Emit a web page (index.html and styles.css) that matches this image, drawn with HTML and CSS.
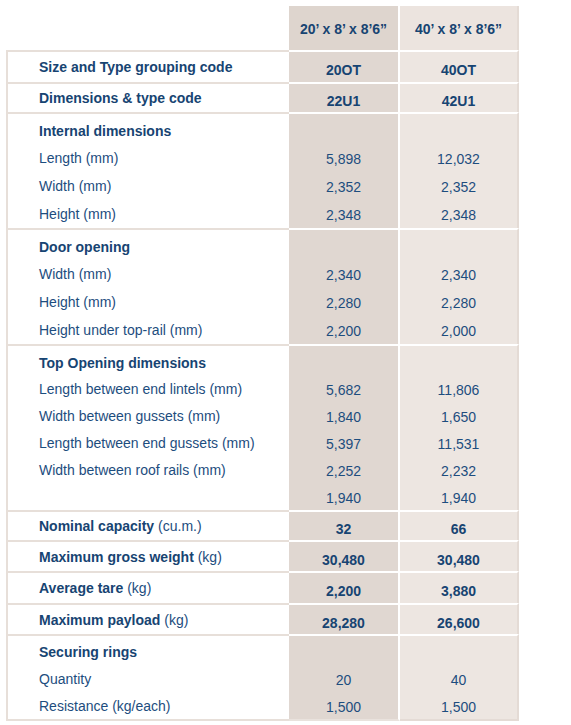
FILE: index.html
```html
<!DOCTYPE html>
<html lang="en">
<head>
  <meta charset="UTF-8" />
  <title>Open Top Container Specifications</title>
  <meta name="viewport" content="width=device-width, initial-scale=1.0" />
  <link rel="stylesheet" href="styles.css">
</head>
<body>
  <table class="spec">
    <colgroup>
      <col class="col-lbl">
      <col class="col-a">
      <col class="col-b">
    </colgroup>
    <thead>
      <tr class="head">
        <th class="blank"></th>
        <th class="v1">20’ x 8’ x 8’6”</th>
        <th class="v2">40’ x 8’ x 8’6”</th>
      </tr>
    </thead>
    <tbody>
      <!-- codes -->
      <tr class="first single h30">
        <td class="lbl"><b>Size and Type grouping code</b></td>
        <td class="v1"><b>20OT</b></td>
        <td class="v2"><b>40OT</b></td>
      </tr>
      <tr class="first single h28">
        <td class="lbl"><b>Dimensions &amp; type code</b></td>
        <td class="v1"><b>22U1</b></td>
        <td class="v2"><b>42U1</b></td>
      </tr>

      <!-- Internal dimensions -->
      <tr class="first group g28">
        <td class="lbl"><b>Internal dimensions</b></td>
        <td class="v1"></td>
        <td class="v2"></td>
      </tr>
      <tr class="sub g28">
        <td class="lbl">Length (mm)</td>
        <td class="v1">5,898</td>
        <td class="v2">12,032</td>
      </tr>
      <tr class="sub g28">
        <td class="lbl">Width (mm)</td>
        <td class="v1">2,352</td>
        <td class="v2">2,352</td>
      </tr>
      <tr class="sub g28">
        <td class="lbl">Height (mm)</td>
        <td class="v1">2,348</td>
        <td class="v2">2,348</td>
      </tr>

      <!-- Door opening -->
      <tr class="first group g28">
        <td class="lbl"><b>Door opening</b></td>
        <td class="v1"></td>
        <td class="v2"></td>
      </tr>
      <tr class="sub g28">
        <td class="lbl">Width (mm)</td>
        <td class="v1">2,340</td>
        <td class="v2">2,340</td>
      </tr>
      <tr class="sub g28">
        <td class="lbl">Height (mm)</td>
        <td class="v1">2,280</td>
        <td class="v2">2,280</td>
      </tr>
      <tr class="sub g28">
        <td class="lbl">Height under top-rail (mm)</td>
        <td class="v1">2,200</td>
        <td class="v2">2,000</td>
      </tr>

      <!-- Top opening -->
      <tr class="first group g27">
        <td class="lbl"><b>Top Opening dimensions</b></td>
        <td class="v1"></td>
        <td class="v2"></td>
      </tr>
      <tr class="sub g27">
        <td class="lbl">Length between end lintels (mm)</td>
        <td class="v1">5,682</td>
        <td class="v2">11,806</td>
      </tr>
      <tr class="sub g27">
        <td class="lbl">Width between gussets (mm)</td>
        <td class="v1">1,840</td>
        <td class="v2">1,650</td>
      </tr>
      <tr class="sub g27">
        <td class="lbl">Length between end gussets (mm)</td>
        <td class="v1">5,397</td>
        <td class="v2">11,531</td>
      </tr>
      <tr class="sub g27">
        <td class="lbl">Width between roof rails (mm)</td>
        <td class="v1">2,252</td>
        <td class="v2">2,232</td>
      </tr>
      <tr class="sub g27">
        <td class="lbl"></td>
        <td class="v1">1,940</td>
        <td class="v2">1,940</td>
      </tr>

      <!-- weights -->
      <tr class="first single h28">
        <td class="lbl"><b>Nominal capacity</b> (cu.m.)</td>
        <td class="v1"><b>32</b></td>
        <td class="v2"><b>66</b></td>
      </tr>
      <tr class="first single h29">
        <td class="lbl"><b>Maximum gross weight</b> (kg)</td>
        <td class="v1"><b>30,480</b></td>
        <td class="v2"><b>30,480</b></td>
      </tr>
      <tr class="first single h30">
        <td class="lbl"><b>Average tare</b> (kg)</td>
        <td class="v1"><b>2,200</b></td>
        <td class="v2"><b>3,880</b></td>
      </tr>
      <tr class="first single h29">
        <td class="lbl"><b>Maximum payload</b> (kg)</td>
        <td class="v1"><b>28,280</b></td>
        <td class="v2"><b>26,600</b></td>
      </tr>

      <!-- Securing rings -->
      <tr class="first group g28 tight">
        <td class="lbl"><b>Securing rings</b></td>
        <td class="v1"></td>
        <td class="v2"></td>
      </tr>
      <tr class="sub g28">
        <td class="lbl">Quantity</td>
        <td class="v1">20</td>
        <td class="v2">40</td>
      </tr>
      <tr class="sub g28 last">
        <td class="lbl">Resistance (kg/each)</td>
        <td class="v1">1,500</td>
        <td class="v2">1,500</td>
      </tr>
    </tbody>
  </table>
</body>
</html>
```

FILE: styles.css
```css
/* ===== Base ===== */
body {
  margin: 0;
  background: #fff;
  font-family: "Liberation Sans", Arial, sans-serif;
  font-size: 14px;
  color: #1d4d7e;
}
b {
  font-weight: bold;
  color: #174472;
}

/* ===== Table ===== */
.spec {
  margin: 6px 0 0 6px;
  width: 513px;
  table-layout: fixed;
  border-collapse: separate;
  border-spacing: 0;
}
.col-lbl { width: 283px; }
.col-a { width: 111px; }
.col-b { width: 119px; }

.spec th,
.spec td {
  box-sizing: border-box;
  padding: 0;
  line-height: 16px;
  vertical-align: middle;
  text-align: center;
}

/* header */
.head th {
  height: 44px;
  font-weight: bold;
  color: #174472;
  padding-top: 2px;
}
.head th.blank { background: none; }

/* columns */
.v1 {
  background: #e0d7d1;
  border-right: 2px solid #fff;
}
.v2 {
  background: #ede6e1;
  border-right: 2px solid #e4dbd5;
}
.head .v1 { background: #ded5ce; }
.head .v2 { background: #ece4df; }

.spec td.lbl {
  text-align: left;
  padding-left: 31px;
  border-left: 2px solid #e7dfd9;
  white-space: nowrap;
}

/* separators between blocks */
.first td.lbl { border-top: 2px solid #e7dfd9; }
.first td.v1,
.first td.v2 { border-top: 2px solid #fff; }

/* row heights */
.h28 td { height: 30px; }
.h29 td { height: 31px; }
.h30 td { height: 32px; }
.single td.v1,
.single td.v2 { padding-top: 6px; }

.g28 td { height: 28px; }
.g27 td { height: 27px; }
.sub td.v1,
.sub td.v2 { padding-top: 2px; }

.group.g28 td { height: 32px; padding-top: 4px; }
.group.g27 td { height: 31px; padding-top: 4px; }
.group.tight td { height: 31px; padding-top: 3px; }

.last td { border-bottom: 2px solid #e7dfd9; }
.last td.v1 { border-bottom-color: #e9e2dd; }
.last td.v2 { border-bottom-color: #e4dbd5; }
```
